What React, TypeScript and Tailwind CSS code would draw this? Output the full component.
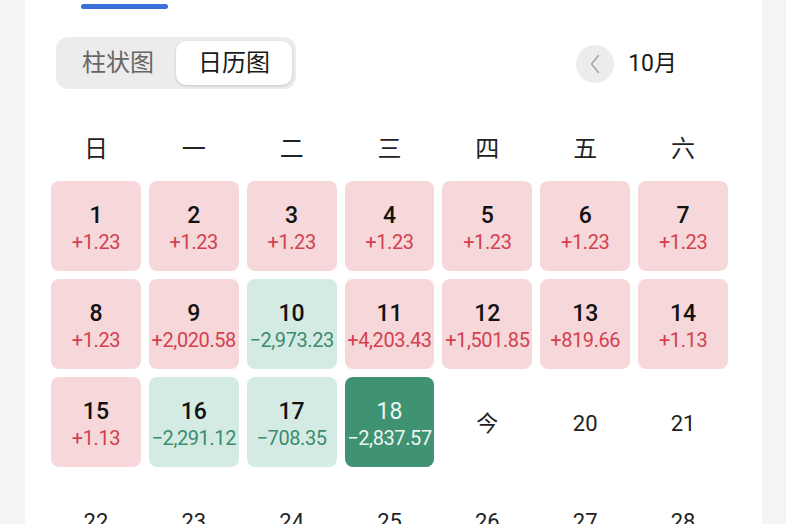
import React from 'react';

type Day = {
  day: number | string;
  value?: string;
  tone?: 'up' | 'down' | 'active';
};

const weekdays = ['日', '一', '二', '三', '四', '五', '六'];

const days: Day[] = [
  { day: 1, value: '+1.23', tone: 'up' },
  { day: 2, value: '+1.23', tone: 'up' },
  { day: 3, value: '+1.23', tone: 'up' },
  { day: 4, value: '+1.23', tone: 'up' },
  { day: 5, value: '+1.23', tone: 'up' },
  { day: 6, value: '+1.23', tone: 'up' },
  { day: 7, value: '+1.23', tone: 'up' },
  { day: 8, value: '+1.23', tone: 'up' },
  { day: 9, value: '+2,020.58', tone: 'up' },
  { day: 10, value: '−2,973.23', tone: 'down' },
  { day: 11, value: '+4,203.43', tone: 'up' },
  { day: 12, value: '+1,501.85', tone: 'up' },
  { day: 13, value: '+819.66', tone: 'up' },
  { day: 14, value: '+1.13', tone: 'up' },
  { day: 15, value: '+1.13', tone: 'up' },
  { day: 16, value: '−2,291.12', tone: 'down' },
  { day: 17, value: '−708.35', tone: 'down' },
  { day: 18, value: '−2,837.57', tone: 'active' },
  { day: '今' },
  { day: 20 },
  { day: 21 },
  { day: 22 },
  { day: 23 },
  { day: 24 },
  { day: 25 },
  { day: 26 },
  { day: 27 },
  { day: 28 },
];

const font = { fontFamily: 'Roboto, "Noto Sans CJK SC", sans-serif' };

const DayCell: React.FC<{ item: Day }> = ({ item }) => {
  if (!item.tone) {
    return (
      <div className="h-[90px] flex items-center justify-center pt-[3px] text-[22px] text-[#222]">
        {item.day}
      </div>
    );
  }

  const box =
    item.tone === 'up'
      ? 'bg-[#f6d7da]'
      : item.tone === 'down'
        ? 'bg-[#d4ebe5]'
        : 'bg-[#3f9272]';
  const num = item.tone === 'active' ? 'text-[#eef6f2] font-normal' : 'text-[#111] font-medium';
  const val =
    item.tone === 'up'
      ? 'text-[#d3414f]'
      : item.tone === 'down'
        ? 'text-[#3b8c6b]'
        : 'text-[#eef6f2]';

  return (
    <div className={`h-[90px] rounded-[8px] flex flex-col items-center justify-center pt-[5px] ${box}`}>
      <div className={`text-[23px] leading-[26px] ${num}`}>{item.day}</div>
      <div className={`text-[20px] leading-[26px] tracking-[-0.4px] whitespace-nowrap ${val}`}>{item.value}</div>
    </div>
  );
};

const App: React.FC = () => {
  return (
    <div className="min-h-screen bg-[#f4f4f4]" style={font}>
      <div className="ml-[25px] w-[737px] h-[524px] overflow-hidden bg-white">
        <div className="ml-[56px] mt-[4px] w-[87px] h-[5px] rounded-full bg-[#3d6fd8]" />

        <div className="mt-[28px] flex items-center pl-[31px] pr-[85px]">
          <div className="flex w-[240px] h-[52px] p-[4px] rounded-[12px] bg-[#ececec]">
            <div className="w-[116px] flex items-center justify-center text-[24px] text-[#666]">柱状图</div>
            <div className="w-[116px] flex items-center justify-center rounded-[10px] bg-white text-[24px] text-[#1a1a1a] shadow-[0_1px_3px_rgba(0,0,0,0.18)]">
              日历图
            </div>
          </div>

          <div className="ml-auto flex items-center gap-[14px] pt-[2px]">
            <div className="w-[38px] h-[38px] rounded-full bg-[#ececec] flex items-center justify-center">
              <svg width="12" height="22" viewBox="0 0 12 22" fill="none">
                <path d="M9.5 2.5 L2.5 11 L9.5 19.5" stroke="#a3a3a3" strokeWidth="1.4" strokeLinecap="round" strokeLinejoin="round" />
              </svg>
            </div>
            <span className="text-[23px] text-[#1a1a1a]">10月</span>
          </div>
        </div>

        <div className="mt-[40px] pl-[26px] w-[703px]">
          <div className="grid grid-cols-7 gap-x-[8px] h-[40px]">
            {weekdays.map((w) => (
              <div key={w} className="flex items-center justify-center text-[24px] text-[#222]">
                {w}
              </div>
            ))}
          </div>

          <div className="mt-[12px] grid grid-cols-7 gap-x-[8px] gap-y-[8px]">
            {days.map((d) => (
              <DayCell key={String(d.day)} item={d} />
            ))}
          </div>
        </div>
      </div>
    </div>
  );
};

export default App;
